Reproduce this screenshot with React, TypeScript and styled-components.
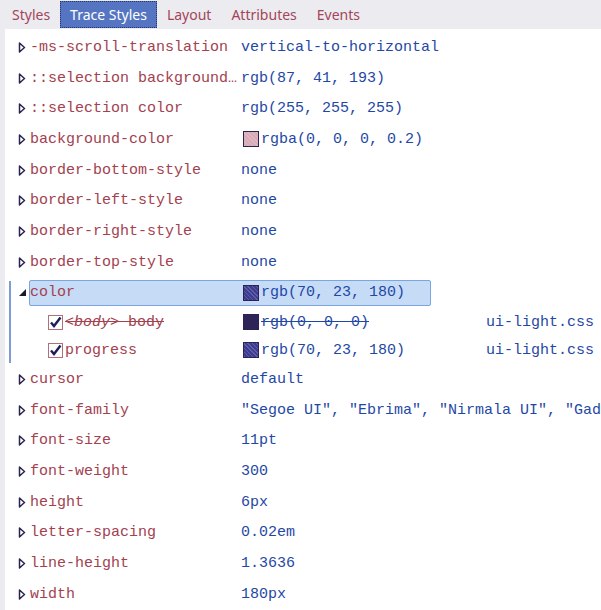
import React from 'react';
import styled, { createGlobalStyle, css } from 'styled-components';

const GlobalStyle = createGlobalStyle`
  html, body {
    margin: 0;
    padding: 0;
    background: #ecebef;
  }
  body {
    width: 601px;
    height: 610px;
    overflow: hidden;
  }
`;

type Prop = {
  name: string;
  value: string;
  swatch?: string;
  expanded?: boolean;
  children?: { name: React.ReactNode; value: string; swatch: string; file: string; struck?: boolean }[];
};

const props: Prop[] = [
  { name: '-ms-scroll-translation', value: 'vertical-to-horizontal' },
  { name: '::selection background-color', value: 'rgb(87, 41, 193)' },
  { name: '::selection color', value: 'rgb(255, 255, 255)' },
  { name: 'background-color', value: 'rgba(0, 0, 0, 0.2)', swatch: '#d9aab8' },
  { name: 'border-bottom-style', value: 'none' },
  { name: 'border-left-style', value: 'none' },
  { name: 'border-right-style', value: 'none' },
  { name: 'border-top-style', value: 'none' },
  {
    name: 'color',
    value: 'rgb(70, 23, 180)',
    swatch: '#3d3a92',
    expanded: true,
    children: [
      { name: <><i>&lt;body&gt;</i> body</>, value: 'rgb(0, 0, 0)', swatch: '#2e2458', file: 'ui-light.css', struck: true },
      { name: 'progress', value: 'rgb(70, 23, 180)', swatch: '#3d3a92', file: 'ui-light.css' },
    ],
  },
  { name: 'cursor', value: 'default' },
  { name: 'font-family', value: '"Segoe UI", "Ebrima", "Nirmala UI", "Gadugi", sans-serif' },
  { name: 'font-size', value: '11pt' },
  { name: 'font-weight', value: '300' },
  { name: 'height', value: '6px' },
  { name: 'letter-spacing', value: '0.02em' },
  { name: 'line-height', value: '1.3636' },
  { name: 'width', value: '180px' },
];

const tabs = ['Styles', 'Trace Styles', 'Layout', 'Attributes', 'Events'];

function Arrow({ open }: { open?: boolean }) {
  if (open) {
    return (
      <ArrowBox>
        <svg width="9" height="9" viewBox="0 0 9 9">
          <path d="M8 1 L8 8 L1 8 Z" fill="#1a1a2a" />
        </svg>
      </ArrowBox>
    );
  }
  return (
    <ArrowBox>
      <svg width="8" height="11" viewBox="0 0 8 11">
        <path d="M1.5 1 L6.5 5.5 L1.5 10 Z" fill="none" stroke="#2a2450" strokeWidth="1.5" strokeLinejoin="round" />
      </svg>
    </ArrowBox>
  );
}

function Check() {
  return (
    <CheckBox>
      <svg width="13" height="13" viewBox="0 0 13 13">
        <path d="M2 6.5 L5 10 L11.5 1.5" fill="none" stroke="#1c1d5a" strokeWidth="2.4" />
      </svg>
    </CheckBox>
  );
}

function App() {
  return (
    <>
      <GlobalStyle />
      <Page>
        <TabBar>
          {tabs.map((t) => (
            <Tab key={t} active={t === 'Trace Styles'}>{t}</Tab>
          ))}
        </TabBar>
        <Panel>
          {props.map((p) => (
            <Group key={p.name} expanded={p.expanded}>
              <Row>
                <Arrow open={p.expanded} />
                <Main selected={p.expanded}>
                  <Name>{p.name}</Name>
                  <Value>
                    {p.swatch && <Swatch color={p.swatch} />}
                    {p.value}
                  </Value>
                </Main>
              </Row>
              {p.children?.map((c, i) => (
                <ChildRow key={i}>
                  <Check />
                  <ChildName struck={c.struck}>{c.name}</ChildName>
                  <ChildValue struck={c.struck}>
                    <Swatch color={c.swatch} solid={c.struck} />
                    <span>{c.value}</span>
                  </ChildValue>
                  <File>{c.file}</File>
                </ChildRow>
              ))}
            </Group>
          ))}
        </Panel>
      </Page>
    </>
  );
}

export default App;

const Page = styled.div`
  width: 601px;
  height: 610px;
  display: flex;
  flex-direction: column;
  overflow: hidden;
`;

const TabBar = styled.div`
  height: 29px;
  display: flex;
  align-items: stretch;
  padding: 1px 0 0 2px;
  box-sizing: border-box;
  background: #ecebef;
`;

const Tab = styled.div<{ active?: boolean }>`
  font-family: 'Noto Sans', 'Open Sans', sans-serif;
  font-size: 14px;
  color: #a2465a;
  padding: 0 10px;
  display: flex;
  align-items: center;
  height: 27px;
  box-sizing: border-box;
  ${(p) =>
    p.active &&
    css`
      background: #5575c2;
      color: #ffffff;
      border: 1px dotted #22336e;
      padding: 0 9px;
    `}
`;

const Panel = styled.div`
  flex: 1;
  margin-left: 5px;
  background: #ffffff;
  padding-top: 3px;
  font-family: 'Liberation Mono', 'DejaVu Sans Mono', monospace;
  font-size: 15px;
`;

const Group = styled.div<{ expanded?: boolean }>`
  position: relative;
  ${(p) =>
    p.expanded &&
    css`
      &::before {
        content: '';
        position: absolute;
        left: 4px;
        top: 3px;
        bottom: 1px;
        width: 2px;
        background: #7f9ad6;
      }
    `}
`;

const Row = styled.div`
  height: 30.7px;
  display: flex;
  align-items: center;
  padding-left: 9px;
`;

const ArrowBox = styled.span`
  width: 14px;
  display: flex;
  align-items: center;
  justify-content: flex-start;
  padding-left: 4px;
  box-sizing: border-box;
`;

const Main = styled.div<{ selected?: boolean }>`
  display: flex;
  align-items: center;
  height: 26px;
  width: 402px;
  box-sizing: border-box;
  border: 1px solid transparent;
  border-radius: 2px;
  margin-left: 1px;
  ${(p) =>
    p.selected &&
    css`
      background: #c6dbf6;
      border-color: #7ba4e2;
    `}
`;

const Name = styled.span`
  width: 211px;
  flex: none;
  color: #a3414f;
  white-space: nowrap;
  overflow: hidden;
  text-overflow: ellipsis;
`;

const Value = styled.span`
  display: flex;
  align-items: center;
  color: #1f48a6;
  white-space: nowrap;
`;

const Swatch = styled.span<{ color: string; solid?: boolean }>`
  width: 16px;
  height: 16px;
  box-sizing: border-box;
  margin: 0 2px 0 2px;
  background: ${(p) => p.color};
  border: 1.5px solid #2b2352;
  flex: none;
  ${(p) =>
    !p.solid &&
    css`
      background-image: repeating-linear-gradient(45deg, rgba(255, 255, 255, 0.18) 0 1px, transparent 1px 3px);
    `}
`;

const ChildRow = styled.div`
  height: 28px;
  display: flex;
  align-items: center;
  padding-left: 43px;
`;

const CheckBox = styled.span`
  width: 15px;
  height: 15px;
  box-sizing: border-box;
  border: 1px solid #b0707a;
  background: #ffffff;
  display: flex;
  align-items: center;
  justify-content: center;
  flex: none;
`;

const ChildName = styled.span<{ struck?: boolean }>`
  width: 176px;
  flex: none;
  padding-left: 2px;
  color: #a3414f;
  white-space: nowrap;
  text-decoration: ${(p) => (p.struck ? 'line-through' : 'none')};
`;

const ChildValue = styled.span<{ struck?: boolean }>`
  width: 245px;
  flex: none;
  display: flex;
  align-items: center;
  color: #1f48a6;
  white-space: nowrap;
  span {
    text-decoration: ${(p) => (p.struck ? 'line-through' : 'none')};
  }
`;

const File = styled.span`
  color: #1f48a6;
  white-space: nowrap;
`;
